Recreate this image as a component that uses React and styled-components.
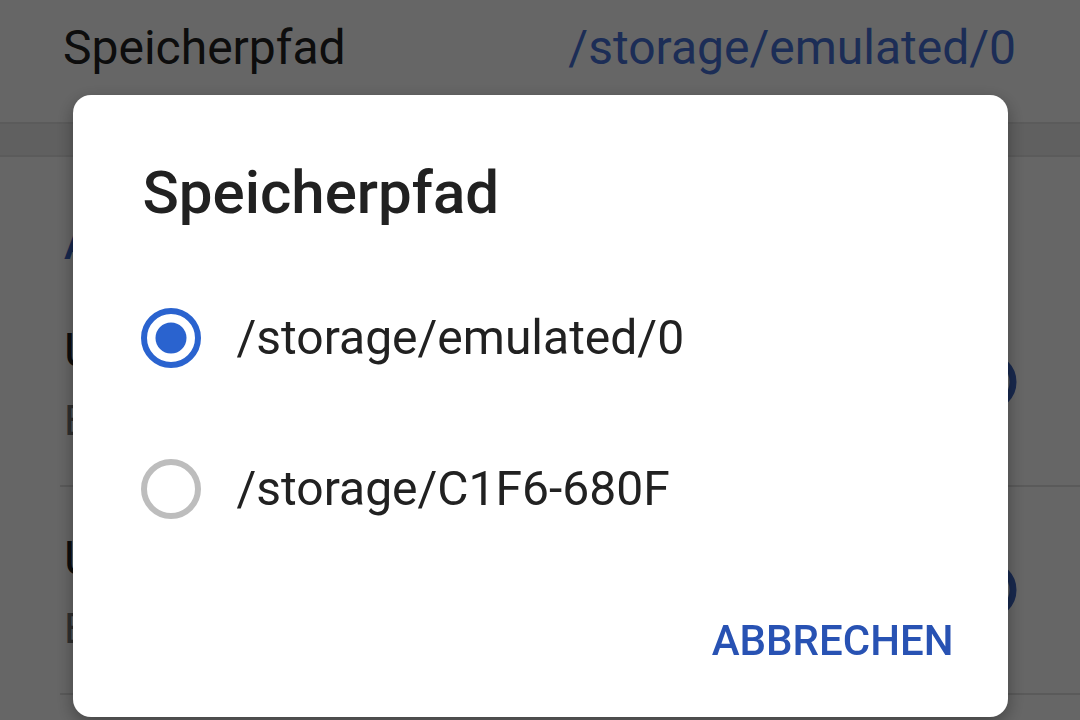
import React from "react";
import styled, { createGlobalStyle } from "styled-components";

const GlobalStyle = createGlobalStyle`
  html, body {
    margin: 0;
    padding: 0;
    width: 1080px;
    height: 720px;
    overflow: hidden;
    font-family: Roboto, "Noto Sans", "Liberation Sans", sans-serif;
    background: #ffffff;
  }
  * { box-sizing: border-box; }
`;

const options = [
  { id: 1, path: "/storage/emulated/0", checked: true },
  { id: 2, path: "/storage/C1F6-680F", checked: false },
];

const rows = [
  { id: 1, title: "Unterordner verwenden", summary: "Erstellt einen Ordner pro Album" },
  { id: 2, title: "Umbenennen erlauben", summary: "Existierende Dateien ersetzen" },
];

const Radio = ({ checked }) => (
  <RadioIcon width="60" height="60" viewBox="0 0 60 60">
    <circle
      cx="30"
      cy="30"
      r="27"
      fill="none"
      stroke={checked ? "#2a63cf" : "#bdbdbd"}
      strokeWidth="6"
    />
    {checked && <circle cx="30" cy="30" r="15.5" fill="#2a63cf" />}
  </RadioIcon>
);

const Ring = () => (
  <svg width="64" height="64" viewBox="0 0 64 64">
    <circle cx="32" cy="32" r="25" fill="none" stroke="#3d66c4" strokeWidth="7" />
  </svg>
);

const App = () => {
  return (
    <>
      <GlobalStyle />
      <Screen>
        <PathRow>
          <PathLabel>Speicherpfad</PathLabel>
          <PathValue>/storage/emulated/0</PathValue>
        </PathRow>
        <Band />
        <Category>Allgemein</Category>
        {rows.map((row) => (
          <SettingRow key={row.id}>
            <SettingText>
              <SettingTitle>{row.title}</SettingTitle>
              <SettingSummary>{row.summary}</SettingSummary>
            </SettingText>
            <Ring />
          </SettingRow>
        ))}
      </Screen>

      <Overlay>
        <Dialog>
          <DialogTitle>Speicherpfad</DialogTitle>
          <OptionList>
            {options.map((opt) => (
              <Option key={opt.id}>
                <Radio checked={opt.checked} />
                <OptionText>{opt.path}</OptionText>
              </Option>
            ))}
          </OptionList>
          <Actions>
            <TextButton>ABBRECHEN</TextButton>
          </Actions>
        </Dialog>
      </Overlay>
    </>
  );
};

const Screen = styled.div`
  width: 1080px;
  height: 720px;
  background: #ffffff;
  display: flex;
  flex-direction: column;
`;

const PathRow = styled.div`
  height: 122px;
  padding: 20px 64px 0 63px;
  display: flex;
  justify-content: space-between;
  align-items: flex-start;
  font-size: 48px;
  line-height: 56px;
`;

const PathLabel = styled.span`
  color: #222222;
`;

const PathValue = styled.span`
  color: #4672d8;
`;

const Band = styled.div`
  height: 35px;
  background: #f0f0f0;
  border-top: 2px solid #e4e4e4;
  border-bottom: 2px solid #e4e4e4;
`;

const Category = styled.div`
  height: 122px;
  padding: 63px 64px 0 64px;
  font-size: 42px;
  line-height: 50px;
  font-weight: 500;
  color: #3d66c4;
`;

const SettingRow = styled.div`
  height: 208px;
  margin-left: 60px;
  padding: 0 60px 0 4px;
  border-bottom: 2px solid #e0e0e0;
  display: flex;
  align-items: center;
  justify-content: space-between;
`;

const SettingText = styled.div`
  display: flex;
  flex-direction: column;
  gap: 17px;
  align-self: flex-start;
  padding-top: 44px;
`;

const SettingTitle = styled.div`
  font-size: 48px;
  line-height: 56px;
  color: #222222;
`;

const SettingSummary = styled.div`
  font-size: 42px;
  line-height: 50px;
  color: #757575;
`;

const Overlay = styled.div`
  position: fixed;
  inset: 0;
  background: rgba(0, 0, 0, 0.6);
  display: flex;
  justify-content: center;
  align-items: flex-start;
  padding-top: 95px;
`;

const Dialog = styled.div`
  width: 935px;
  height: 622px;
  background: #ffffff;
  border-radius: 18px;
  box-shadow: 0 6px 18px rgba(0, 0, 0, 0.35);
  display: flex;
  flex-direction: column;
  padding: 62px 54px 0 70px;
`;

const DialogTitle = styled.h2`
  margin: 0;
  font-size: 60px;
  line-height: 72px;
  font-weight: 500;
  color: #212121;
`;

const OptionList = styled.div`
  margin-top: 33px;
  display: flex;
  flex-direction: column;
`;

const Option = styled.div`
  height: 151px;
  display: flex;
  align-items: center;
  gap: 36px;
`;

const RadioIcon = styled.svg`
  flex-shrink: 0;
  margin-left: -2px;
`;

const OptionText = styled.span`
  font-size: 48px;
  line-height: 56px;
  color: #212121;
`;

const Actions = styled.div`
  margin-top: 53px;
  display: flex;
  justify-content: flex-end;
`;

const TextButton = styled.button`
  border: none;
  background: none;
  padding: 0;
  font-family: inherit;
  font-size: 42px;
  line-height: 48px;
  font-weight: 500;
  color: #2852b3;
  cursor: pointer;
`;

export default App;
